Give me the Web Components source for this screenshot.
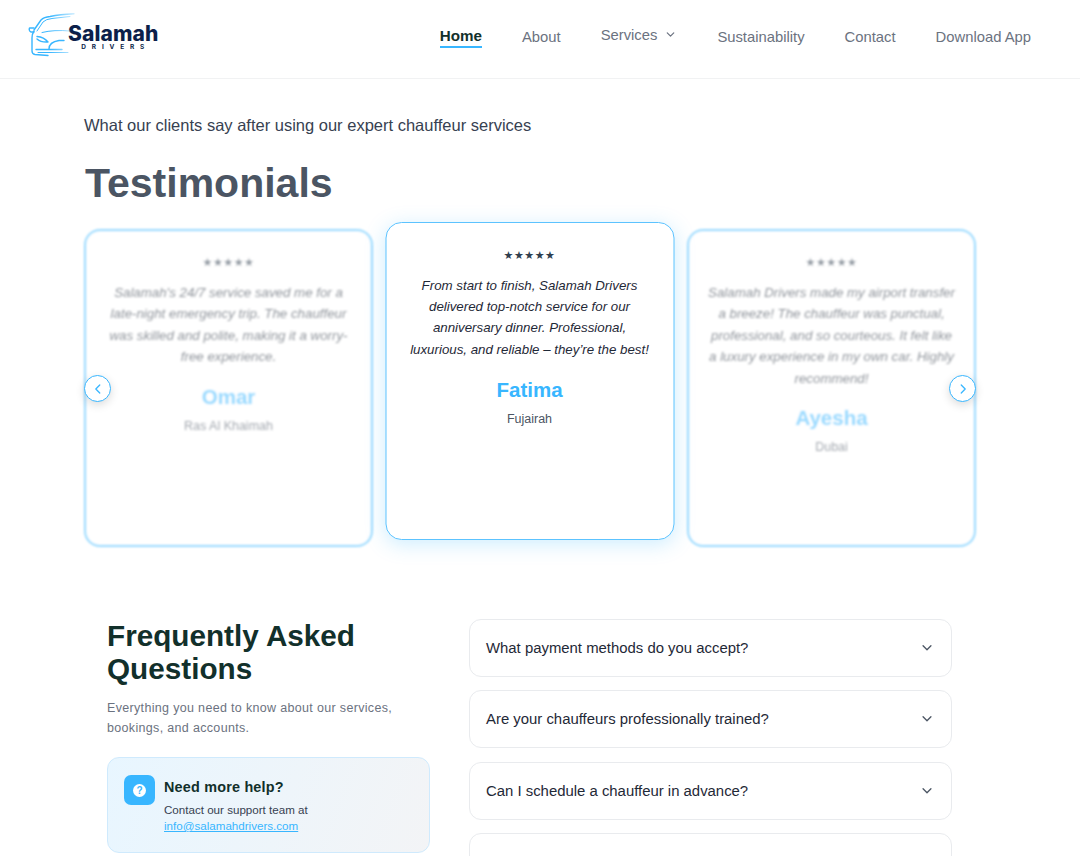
<!DOCTYPE html>
<html lang="en">
<head>
<meta charset="utf-8">
<title>Salamah Drivers</title>
<style>
  html, body { margin: 0; height: 856px; overflow: hidden; background: #fff; }
  body { font-family: "Liberation Sans", Arial, sans-serif; color: #1f2937; }
</style>
</head>
<body>
<site-header></site-header>
<testimonials-section>
  <testimonial-card rating="5" name="Omar" place="Ras Al Khaimah">Salamah's 24/7 service saved me for a late-night emergency trip. The chauffeur was skilled and polite, making it a worry-free experience.</testimonial-card>
  <testimonial-card active rating="5" name="Fatima" place="Fujairah">From start to finish, Salamah Drivers delivered top-notch service for our anniversary dinner. Professional, luxurious, and reliable – they’re the best!</testimonial-card>
  <testimonial-card rating="5" name="Ayesha" place="Dubai">Salamah Drivers made my airport transfer a breeze! The chauffeur was punctual, professional, and so courteous. It felt like<br>a luxury experience in my own car. Highly recommend!</testimonial-card>
</testimonials-section>
<faq-section>
  <faq-item>What payment methods do you accept?</faq-item>
  <faq-item>Are your chauffeurs professionally trained?</faq-item>
  <faq-item>Can I schedule a chauffeur in advance?</faq-item>
  <faq-item></faq-item>
</faq-section>

<script>
const chevron = (points, size) => `<svg width="${size}" height="${size}" viewBox="0 0 16 16" fill="none" stroke="currentColor" stroke-width="1.5" stroke-linecap="round" stroke-linejoin="round"><polyline points="${points}"/></svg>`;

class SiteHeader extends HTMLElement {
  constructor() {
    super();
    this.attachShadow({ mode: 'open' });
    this.shadowRoot.innerHTML = `
      <style>
        :host { display: flex; align-items: center; justify-content: space-between; height: 78px; padding: 0 49px 0 28px; border-bottom: 1px solid #f1f2f3; box-sizing: content-box; }
        .logo { display: flex; align-items: flex-start; height: 44px; margin-top: -8px; }
        .logo svg { display: block; width: 48px; height: 44px; flex: none; filter: blur(.25px); }
        .word { margin: 10px 0 0 -8px; text-align: center; color: #0c1f4a; }
        .word b { display: block; font: 800 21px/21px Inter, sans-serif; letter-spacing: .1px; }
        .word span { display: block; font: 700 6.5px/7px Inter, sans-serif; letter-spacing: 5.8px; margin-top: 0; padding-left: 5px; }
        nav { display: flex; align-items: center; gap: 40px; font-size: 14.8px; color: #6b7280; margin-top: -5px; }
        a { color: inherit; text-decoration: none; display: block; line-height: 20px; }
        a.on { color: #12302b; font-size: 15.2px; font-weight: 700; border-bottom: 2px solid #38b6ff; line-height: 18px; margin-top: 2px; padding-bottom: 1px; }
        a.drop { display: flex; align-items: center; gap: 7px; margin-bottom: 4px; }
      </style>
      <div class="logo">
        <svg viewBox="0 0 48 44" fill="none" stroke="#38b6ff" stroke-width="1.4" stroke-linecap="round" stroke-linejoin="round">
          <defs>
            <linearGradient id="fade" gradientUnits="userSpaceOnUse" x1="0" y1="0" x2="48" y2="0">
              <stop offset=".45" stop-color="#38b6ff"/>
              <stop offset="1" stop-color="#38b6ff" stop-opacity=".2"/>
            </linearGradient>
          </defs>
          <path stroke="url(#fade)" d="M6 17 L13 7 Q16 4 22 3.500 Q32 1.500 46 .8"/>
          <path stroke="url(#fade)" stroke-width="1" d="M9 18 L15 9 Q18 6 24 5.500 L42 3.500"/>
          <path d="M6 15 H1.500 Q.5 18 3 19 H6"/>
          <path d="M6 18 Q4 21 4 25 V38 Q4 41 7 41.500 L20 42.500"/>
          <path stroke="url(#fade)" d="M8 36.500 H34"/>
          <path stroke="url(#fade)" stroke-width="1" d="M10 39.500 H40"/>
          <path d="M9 23.500 Q16 24 20 29 Q13 29.500 9 26"/>
          <path stroke="url(#fade)" stroke-width="1" d="M14 19.500 Q26 16.500 42 18"/>
          <path d="M21 36 Q21 29 31 27.500 H36"/>
        </svg>
        <div class="word"><b>Salamah</b><span>DRIVERS</span></div>
      </div>
      <nav>
        <a class="on" href="#">Home</a>
        <a href="#">About</a>
        <a class="drop" href="#">Services ${chevron('4,6 8,10 12,6', 13)}</a>
        <a href="#">Sustainability</a>
        <a href="#">Contact</a>
        <a href="#">Download App</a>
      </nav>`;
  }
}

class TestimonialsSection extends HTMLElement {
  constructor() {
    super();
    this.attachShadow({ mode: 'open' });
    this.shadowRoot.innerHTML = `
      <style>
        :host { display: block; padding: 35px 104px 0 84px; }
        p { margin: 0; font-size: 16.5px; line-height: 22px; color: #374151; }
        h2 { margin: 23px 0 0; font-size: 41px; line-height: 48px; font-weight: 700; color: #4b5563; padding-left: 1px; }
        .track { position: relative; margin-top: 22px; }
        .cards { display: grid; grid-template-columns: repeat(3, 1fr); gap: 12.5px; height: 318px; }
        button { position: absolute; top: 146px; width: 27px; height: 27px; padding: 0; display: grid; place-items: center; border-radius: 50%; border: 1px solid #38b6ff; background: #fff; color: #38b6ff; box-shadow: 0 3px 10px rgba(0,0,0,.14); }
        .prev { left: 0; }
        .next { right: 0; }
      </style>
      <p>What our clients say after using our expert chauffeur services</p>
      <h2>Testimonials</h2>
      <div class="track">
        <div class="cards"><slot></slot></div>
        <button class="prev" aria-label="Previous">${chevron('10,3.500 5.500,8 10,12.500', 14)}</button>
        <button class="next" aria-label="Next">${chevron('6,3.500 10.500,8 6,12.500', 14)}</button>
      </div>`;
  }
}

class TestimonialCard extends HTMLElement {
  constructor() {
    super();
    this.attachShadow({ mode: 'open' });
  }

  connectedCallback() {
    const rating = Number(this.getAttribute('rating') || 5);
    this.shadowRoot.innerHTML = `
      <style>
        :host { display: block; box-sizing: border-box; height: 318px; padding: 24px 17px; background: #fff; border: 2px solid #38b6ff; border-radius: 16px; text-align: center; opacity: .5; filter: blur(.8px); }
        :host([active]) { border-width: 1.5px; padding: 24.5px 17.5px; border-color: #5cc3ff; opacity: 1; filter: none; transform: translate(-.5px, -7px); box-shadow: 0 4px 20px rgba(56,182,255,.25); }
        :host([active]) .name { margin-top: 16px; }
        .stars { font: 11px/16px "DejaVu Sans", sans-serif; letter-spacing: .5px; color: #2f3e4e; }
        .quote { margin: 11px 0 0; font-size: 13.3px; line-height: 21.4px; font-style: italic; color: #1f2937; }
        .name { margin-top: 15px; font-size: 20.5px; line-height: 28px; font-weight: 700; color: #38b6ff; }
        .place { margin-top: 7px; font-size: 12.5px; line-height: 16px; color: #4b5563; }
      </style>
      <div class="stars">${'★'.repeat(rating)}</div>
      <p class="quote"><slot></slot></p>
      <div class="name">${this.getAttribute('name')}</div>
      <div class="place">${this.getAttribute('place')}</div>`;
  }
}

class FaqSection extends HTMLElement {
  constructor() {
    super();
    this.attachShadow({ mode: 'open' });
    this.shadowRoot.innerHTML = `
      <style>
        :host { display: grid; grid-template-columns: 323px 483px; column-gap: 39px; padding: 72px 0 0 107px; }
        h2 { margin: 0; font-size: 29.7px; line-height: 33px; font-weight: 700; color: #12302b; }
        p { margin: 13px 0 0; font-size: 12.5px; line-height: 20px; letter-spacing: .33px; color: #6b7280; }
        help-box { margin-top: 19px; }
        .list { display: flex; flex-direction: column; gap: 13.3px; }
      </style>
      <div>
        <h2>Frequently Asked Questions</h2>
        <p>Everything you need to know about our services, bookings, and accounts.</p>
        <help-box></help-box>
      </div>
      <div class="list"><slot></slot></div>`;
  }
}

class HelpBox extends HTMLElement {
  constructor() {
    super();
    this.attachShadow({ mode: 'open' });
    this.shadowRoot.innerHTML = `
      <style>
        :host { display: flex; gap: 9px; box-sizing: border-box; height: 96px; padding: 17px 16px; border: 1px solid #cfeafd; border-radius: 12px; background: linear-gradient(110deg, #e8f6ff, #f3f4f6); }
        .icon { flex: none; width: 31px; height: 30px; border-radius: 7px; background: #38b6ff; display: grid; place-items: center; }
        .icon span { width: 13px; height: 13px; border-radius: 50%; background: #fff; color: #38b6ff; font: 700 10px/13px "Liberation Sans", sans-serif; text-align: center; }
        .body { padding-top: 2px; }
        h3 { margin: 0; font-size: 14.4px; line-height: 20px; font-weight: 700; letter-spacing: .2px; color: #12302b; }
        div.txt { font-size: 11.6px; line-height: 16px; color: #374151; margin-top: 5px; }
        a { color: #38b6ff; display: block; }
      </style>
      <div class="icon"><span>?</span></div>
      <div class="body">
        <h3>Need more help?</h3>
        <div class="txt">Contact our support team at<a href="#">info@salamahdrivers.com</a></div>
      </div>`;
  }
}

class FaqItem extends HTMLElement {
  constructor() {
    super();
    this.attachShadow({ mode: 'open' });
    this.shadowRoot.innerHTML = `
      <style>
        :host { display: flex; align-items: center; justify-content: space-between; box-sizing: border-box; height: 58px; padding: 0 17px 0 16px; background: #fff; border: 1px solid #e9ebee; border-radius: 12px; font-size: 14.9px; color: #1f2937; }
        svg { color: #4b5563; display: block; }
      </style>
      <span><slot></slot></span>
      ${chevron('3.500,5.500 8,10 12.500,5.500', 14)}`;
  }
}

customElements.define('site-header', SiteHeader);
customElements.define('testimonials-section', TestimonialsSection);
customElements.define('testimonial-card', TestimonialCard);
customElements.define('help-box', HelpBox);
customElements.define('faq-section', FaqSection);
customElements.define('faq-item', FaqItem);
</script>
</body>
</html>
